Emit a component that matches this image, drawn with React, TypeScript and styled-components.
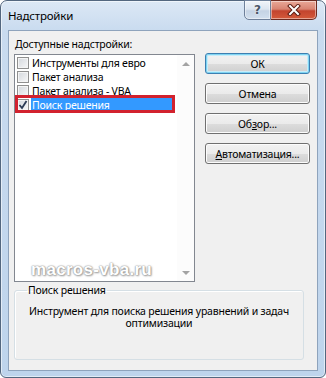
import React from "react";
import styled, { createGlobalStyle } from "styled-components";

const GlobalStyle = createGlobalStyle`
  html, body {
    margin: 0;
    padding: 0;
    background: #ffffff;
  }
  body {
    font-family: "Noto Sans", "DejaVu Sans", sans-serif;
    font-size: 10.5px;
    letter-spacing: -0.2px;
    color: #000;
  }
`;

const Window = styled.div`
  width: 326px;
  height: 378px;
  box-sizing: border-box;
  border: 1px solid #53677f;
  border-radius: 7px 7px 6px 6px;
  background: linear-gradient(#dce8f5, #c9dbef 30px, #bed4ec);
  box-shadow: inset 0 0 0 1px rgba(255, 255, 255, 0.55);
  padding: 0 7px 6px 7px;
  display: flex;
  flex-direction: column;
`;

const TitleBar = styled.div`
  height: 29px;
  display: flex;
  align-items: flex-start;
`;

const Title = styled.div`
  padding-top: 7px;
  line-height: 16px;
  font-size: 11.5px;
  color: #000;
`;

const CaptionButtons = styled.div`
  margin: -1px 1px 0 auto;
  display: flex;
`;

const CaptionButton = styled.div<{ $close?: boolean }>`
  width: ${(p) => (p.$close ? "46px" : "27px")};
  height: 20px;
  box-sizing: border-box;
  border: 1px solid ${(p) => (p.$close ? "#6b2a20" : "#6e809a")};
  border-left: ${(p) => (p.$close ? "none" : undefined)};
  border-radius: ${(p) => (p.$close ? "0 0 5px 0" : "0 0 0 5px")};
  background: ${(p) =>
    p.$close
      ? "linear-gradient(#e9a898, #d88472 45%, #c3442e 55%, #d45a3a)"
      : "linear-gradient(#f0f4f9, #dce5f0 45%, #c5d3e4 55%, #d2dfee)"};
  box-shadow: inset 0 0 0 1px rgba(255, 255, 255, 0.45);
  display: flex;
  align-items: center;
  justify-content: center;
`;

const HelpGlyph = styled.span`
  font-family: "DejaVu Sans", sans-serif;
  font-size: 12px;
  font-weight: bold;
  color: #4a5666;
  text-shadow: 0 0 2px #ffffff;
  line-height: 1;
`;

const Client = styled.div`
  flex: 1;
  border: 1px solid #8ea3bc;
  background: #f0f0f0;
  padding: 6px 7px 10px 5px;
  display: flex;
  flex-direction: column;
`;

const TopArea = styled.div`
  display: flex;
`;

const LeftColumn = styled.div`
  width: 181px;
  display: flex;
  flex-direction: column;
`;

const Label = styled.div`
  line-height: 15px;
  margin-bottom: 2px;
  padding-left: 1px;
`;

const Mnemonic = styled.span`
  text-decoration: underline;
  text-underline-offset: 1px;
`;

const ListBox = styled.div`
  position: relative;
  height: 228px;
  box-sizing: border-box;
  border: 1px solid #828790;
  background: #ffffff;
  display: flex;
`;

const Rows = styled.div`
  flex: 1;
  padding: 1px 4px 0 0;
`;

const Row = styled.div<{ $marked?: boolean }>`
  position: relative;
  height: 14px;
  display: flex;
  align-items: center;
  padding-left: 2px;

  ${(p) =>
    p.$marked &&
    `
    &::after {
      content: "";
      position: absolute;
      left: 0;
      right: -2px;
      top: -3px;
      bottom: -1px;
      border: 3px solid #d2222e;
      pointer-events: none;
    }
  `}
`;

const CheckBox = styled.span`
  width: 12px;
  height: 12px;
  box-sizing: border-box;
  flex-shrink: 0;
  border: 1px solid #8f8f8f;
  background: linear-gradient(135deg, #d3d7dc, #f7f7f8);
  box-shadow: inset 0 0 0 1px #f4f4f4;
  display: flex;
  align-items: center;
  justify-content: center;
`;

const ItemText = styled.span<{ $selected?: boolean }>`
  flex: 1;
  margin-left: 2px;
  padding-left: 1px;
  line-height: 14px;
  white-space: nowrap;
  background: ${(p) => (p.$selected ? "#3399ff" : "transparent")};
  color: ${(p) => (p.$selected ? "#ffffff" : "#000000")};
`;

const ScrollBar = styled.div`
  width: 17px;
  display: flex;
  flex-direction: column;
  justify-content: space-between;
  align-items: center;
  background: #fcfcfc;
`;

const Arrow = styled.div<{ $down?: boolean }>`
  height: 17px;
  display: flex;
  align-items: center;
  justify-content: center;
  &::before {
    content: "";
    border-left: 4px solid transparent;
    border-right: 4px solid transparent;
    ${(p) =>
      p.$down
        ? "border-top: 4px solid #a3a3a3;"
        : "border-bottom: 4px solid #a3a3a3;"}
  }
`;

const Watermark = styled.div`
  position: absolute;
  left: 16px;
  top: 205px;
  font-family: "Liberation Sans", sans-serif;
  font-weight: bold;
  font-size: 17px;
  letter-spacing: 0.3px;
  color: #ffffff;
  text-shadow: 0 0 1px #8c8c8c, 0 0 2px #9a9a9a, 1px 1px 2px #a0a0a0;
  pointer-events: none;
`;

const ButtonColumn = styled.div`
  margin-left: auto;
  margin-top: 16px;
  width: 105px;
  display: flex;
  flex-direction: column;
  gap: 9px;
`;

const Button = styled.div<{ $default?: boolean }>`
  height: 21px;
  box-sizing: border-box;
  border: 1px solid ${(p) => (p.$default ? "#3c7fb1" : "#707070")};
  border-radius: 3px;
  background: linear-gradient(#f2f2f2, #ebebeb 50%, #dddddd 51%, #cfcfcf);
  box-shadow: ${(p) =>
    p.$default
      ? "inset 0 0 0 1px #7fd4f2, inset 0 0 0 2px #c8ecf9"
      : "inset 0 0 0 1px #fcfcfc"};
  display: flex;
  align-items: center;
  justify-content: center;
  line-height: 14px;
`;

const GroupBox = styled.fieldset`
  margin: 1px 6px 0 0;
  padding: 7px 8px 0 8px;
  flex: 1;
  border: 1px solid #d5dfe5;
  border-radius: 3px;
  box-shadow: inset 1px 1px 0 #ffffff;
`;

const Legend = styled.legend`
  padding: 0 1px;
  margin-left: 4px;
  line-height: 15px;
`;

const Description = styled.div`
  text-align: center;
  line-height: 12px;
`;

const items = [
  { name: "Инструменты для евро", checked: false },
  { name: "Пакет анализа", checked: false },
  { name: "Пакет анализа - VBA", checked: false },
  { name: "Поиск решения", checked: true },
];

const CloseGlyph = () => (
  <svg width="16" height="12" viewBox="0 0 16 12">
    <path d="M4 2 L12 10 M12 2 L4 10" stroke="#5b1c12" strokeWidth="4" strokeLinecap="square" />
    <path d="M4 2 L12 10 M12 2 L4 10" stroke="#ffffff" strokeWidth="2" strokeLinecap="square" />
  </svg>
);

const CheckMark = () => (
  <svg width="10" height="10" viewBox="0 0 10 10">
    <path d="M1.5 5 L4 8 L8.5 1" fill="none" stroke="#2b3a55" strokeWidth="1.8" />
  </svg>
);

export default function App() {
  return (
    <>
      <GlobalStyle />
      <Window>
        <TitleBar>
          <Title>Надстройки</Title>
          <CaptionButtons>
            <CaptionButton>
              <HelpGlyph>?</HelpGlyph>
            </CaptionButton>
            <CaptionButton $close>
              <CloseGlyph />
            </CaptionButton>
          </CaptionButtons>
        </TitleBar>
        <Client>
          <TopArea>
            <LeftColumn>
              <Label>
                <Mnemonic>Д</Mnemonic>оступные надстройки:
              </Label>
              <ListBox>
                <Rows>
                  {items.map((it) => (
                    <Row key={it.name} $marked={it.checked}>
                      <CheckBox>{it.checked && <CheckMark />}</CheckBox>
                      <ItemText $selected={it.checked}>{it.name}</ItemText>
                    </Row>
                  ))}
                </Rows>
                <ScrollBar>
                  <Arrow />
                  <Arrow $down />
                </ScrollBar>
                <Watermark>macros-vba.ru</Watermark>
              </ListBox>
            </LeftColumn>
            <ButtonColumn>
              <Button $default>ОК</Button>
              <Button>Отмена</Button>
              <Button>
                Об<Mnemonic>з</Mnemonic>ор...
              </Button>
              <Button>
                <Mnemonic>А</Mnemonic>втоматизация...
              </Button>
            </ButtonColumn>
          </TopArea>
          <GroupBox>
            <Legend>Поиск решения</Legend>
            <Description>
              Инструмент для поиска решения уравнений и задач оптимизации
            </Description>
          </GroupBox>
        </Client>
      </Window>
    </>
  );
}
